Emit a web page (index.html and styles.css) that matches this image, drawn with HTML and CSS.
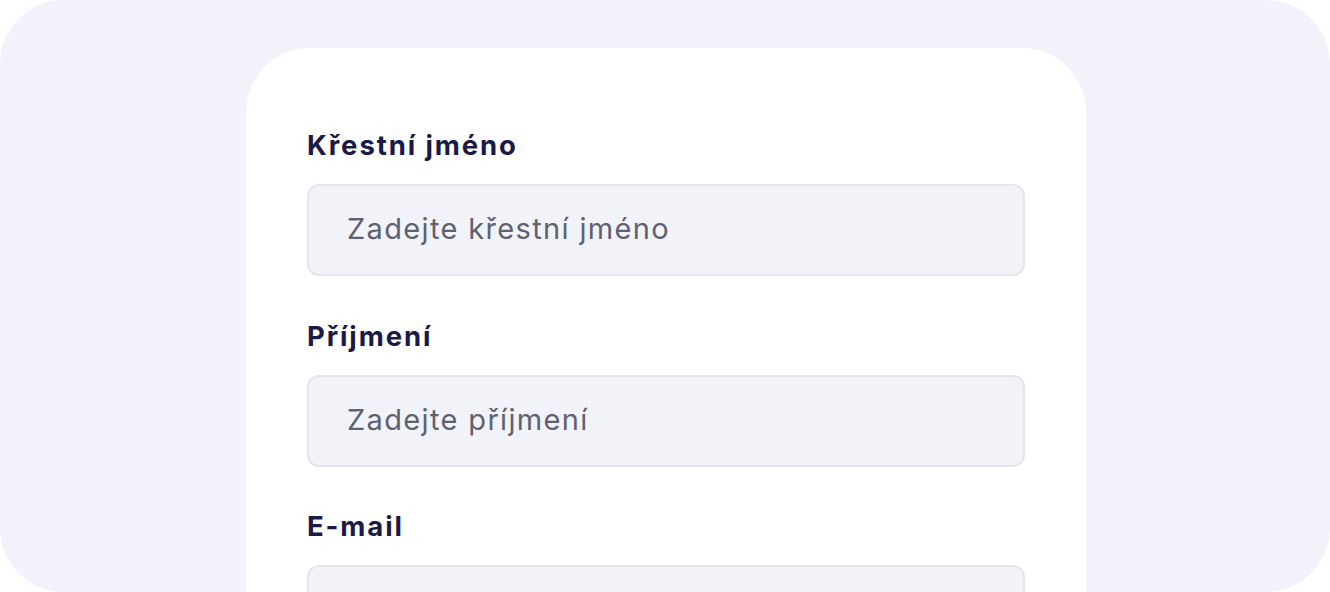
FILE: index.html
```html
<!DOCTYPE html>
<html lang="cs">
<head>
<meta charset="utf-8">
<title>Formulář</title>
<link rel="stylesheet" href="styles.css">
</head>
<body>
<div class="frame">
  <form class="card">
    <div class="field">
      <label class="label" for="first">Křestní jméno</label>
      <input class="input" id="first" type="text" placeholder="Zadejte křestní jméno">
    </div>
    <div class="field">
      <label class="label" for="last">Příjmení</label>
      <input class="input" id="last" type="text" placeholder="Zadejte příjmení">
    </div>
    <div class="field">
      <label class="label" for="mail">E-mail</label>
      <input class="input" id="mail" type="email" placeholder="Zadejte e-mail">
    </div>
  </form>
</div>
</body>
</html>
```
FILE: styles.css
```css
html, body {
  margin: 0;
  padding: 0;
  background: #ffffff;
}
body {
  font-family: Inter, "Open Sans", "Liberation Sans", sans-serif;
}
.frame {
  width: 1330px;
  height: 592px;
  box-sizing: border-box;
  background: #f2f3fa;
  border-radius: 64px;
  overflow: hidden;
  padding-top: 48px;
}
.card {
  margin: 0 0 0 246px;
  width: 840px;
  box-sizing: border-box;
  background: #ffffff;
  border-radius: 64px;
  padding: 77px 61px 60px 61px;
  display: flex;
  flex-direction: column;
  gap: 39.5px;
}
.field {
  display: flex;
  flex-direction: column;
  gap: 19px;
}
.label {
  font-size: 27.5px;
  line-height: 40px;
  font-weight: 700;
  letter-spacing: 1.9px;
  color: #1b1a47;
}
.input {
  height: 92px;
  box-sizing: border-box;
  width: 100%;
  margin: 0;
  border: 2px solid #e5e6ec;
  border-radius: 12px;
  background: #f2f3f8;
  padding: 0 38px 3px 38px;
  font-family: inherit;
  font-size: 29px;
  letter-spacing: 1.35px;
  color: #1b1a47;
  outline: none;
}
.input::placeholder {
  color: #5e6172;
  opacity: 1;
}
```
